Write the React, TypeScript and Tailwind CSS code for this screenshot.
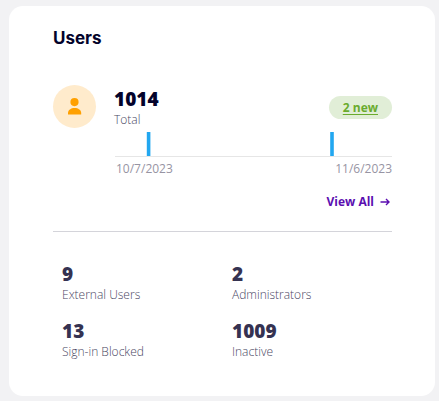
const stats = [
  { value: '9', label: 'External Users' },
  { value: '2', label: 'Administrators' },
  { value: '13', label: 'Sign-in Blocked' },
  { value: '1009', label: 'Inactive' },
];

function PersonIcon() {
  return (
    <svg viewBox="0 0 14 17" className="h-[17px] w-[14px]" fill="#ffa000" aria-hidden="true">
      <circle cx="6.5" cy="4.1" r="4.1" />
      <path d="M0 16.5V15C0 11.9 3 9.9 6.6 9.9s6.6 2 6.6 5.1v1.5Z" />
    </svg>
  );
}

function ArrowIcon() {
  return (
    <svg viewBox="0 0 10 10" className="size-[10px]" fill="none" stroke="currentColor" strokeWidth="1.4" aria-hidden="true">
      <path d="M0.5 5H9M6 2 9 5 6 8" />
    </svg>
  );
}

function ActivityChart() {
  return (
    <svg
      viewBox="0 0 277 25"
      preserveAspectRatio="none"
      className="block h-[25px] w-full"
      role="img"
      aria-label="New users per day"
    >
      <path d="M0 24.5H277" stroke="#e6e6e6" />
      <rect x="31.8" y="0" width="3.6" height="24" fill="#22a7f0" />
      <rect x="215.2" y="0" width="3.6" height="24" fill="#22a7f0" />
    </svg>
  );
}

export default function App() {
  return (
    <div className="min-h-screen bg-[#f2f2f4] pt-[6px] pr-1 pb-[5px] pl-[9px] font-['Open_Sans','Noto_Sans',sans-serif]">
      <main className="rounded-[14px] bg-white pt-5 pr-[43px] pb-9 pl-11">
        <h1 className="font-['Inter',sans-serif] text-[17px] leading-6 font-bold text-[#03032b]">Users</h1>

        <section className="mt-[35px] flex gap-[18px] border-b border-[#d4d4da] pb-5">
          <div className="flex size-[43px] shrink-0 items-center justify-center rounded-full bg-[#ffebcc]">
            <PersonIcon />
          </div>
          <div className="min-w-0 flex-1">
            <div className="flex items-center justify-between pt-px">
              <div>
                <p className="text-[19px] leading-[26px] font-extrabold text-[#03032b]">1014</p>
                <p className="text-[12px] leading-4 font-light text-[#4a4764]">Total</p>
              </div>
              <a
                href="#new"
                className="rounded-full bg-[#e1eed7] px-[14px] text-[12px] leading-[23px] font-bold text-[#6aab2e] underline underline-offset-2"
              >
                2 new
              </a>
            </div>
            <div className="mt-1 pl-px">
              <ActivityChart />
            </div>
            <div className="flex justify-between pt-1 pl-[2px] text-[12px] leading-4 text-[#9794a3]">
              <span>10/7/2023</span>
              <span>11/6/2023</span>
            </div>
            <div className="mt-4 flex justify-end pr-[2px]">
              <a href="#all" className="flex items-center gap-[6px] text-[12px] leading-[18px] font-bold text-[#5b0eb0]">
                View All
                <ArrowIcon />
              </a>
            </div>
          </div>
        </section>

        <dl className="mt-[30px] grid grid-cols-2 gap-x-[10px] gap-y-4 pl-[9px]">
          {stats.map((stat) => (
            <div key={stat.label} className="flex flex-col">
              <dt className="order-last text-[12px] leading-4 font-light text-[#4a4764]">{stat.label}</dt>
              <dd className="text-[19px] leading-[25px] font-extrabold text-[#353251]">{stat.value}</dd>
            </div>
          ))}
        </dl>
      </main>
    </div>
  );
}
